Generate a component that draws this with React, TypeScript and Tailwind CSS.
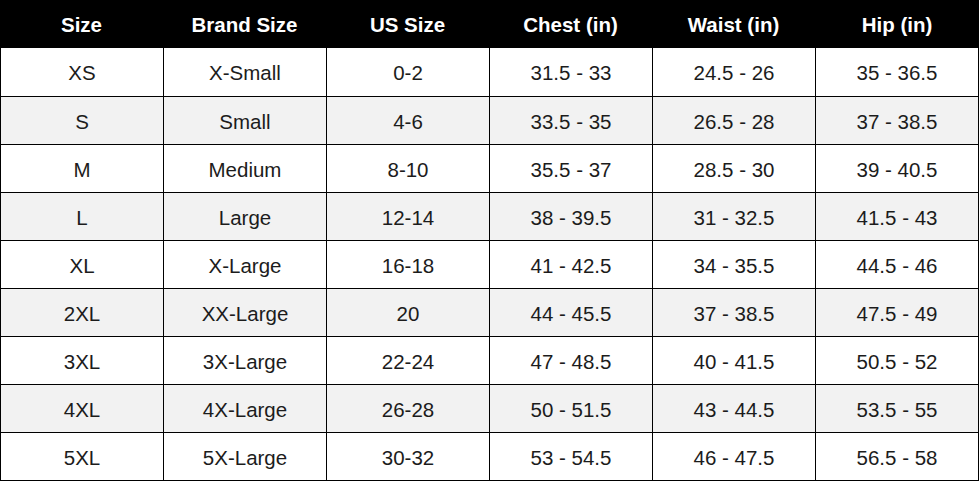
const headers = ["Size", "Brand Size", "US Size", "Chest (in)", "Waist (in)", "Hip (in)"];

const rows = [
  ["XS", "X-Small", "0-2", "31.5 - 33", "24.5 - 26", "35 - 36.5"],
  ["S", "Small", "4-6", "33.5 - 35", "26.5 - 28", "37 - 38.5"],
  ["M", "Medium", "8-10", "35.5 - 37", "28.5 - 30", "39 - 40.5"],
  ["L", "Large", "12-14", "38 - 39.5", "31 - 32.5", "41.5 - 43"],
  ["XL", "X-Large", "16-18", "41 - 42.5", "34 - 35.5", "44.5 - 46"],
  ["2XL", "XX-Large", "20", "44 - 45.5", "37 - 38.5", "47.5 - 49"],
  ["3XL", "3X-Large", "22-24", "47 - 48.5", "40 - 41.5", "50.5 - 52"],
  ["4XL", "4X-Large", "26-28", "50 - 51.5", "43 - 44.5", "53.5 - 55"],
  ["5XL", "5X-Large", "30-32", "53 - 54.5", "46 - 47.5", "56.5 - 58"],
];

const rowClass = (r: number) => {
  const bg = r % 2 === 1 ? "bg-[#f2f2f2]" : "bg-white";
  if (r === 0) return `flex h-[48px] ${bg}`;
  if (r === rows.length - 1) return `flex h-[49px] border-y border-black ${bg}`;
  return `flex h-[48px] border-t border-black ${bg}`;
};

const App = () => {
  return (
    <div className="w-[979px] bg-white font-['Liberation_Sans',Arial,sans-serif] text-[20.5px] leading-none">
      <div className="flex h-[48px] bg-black text-white font-bold">
        {headers.map((h, i) => (
          <div
            key={h}
            className={
              i === 5
                ? "flex flex-1 items-center justify-center pt-[2px]"
                : "flex w-[163px] items-center justify-center pt-[2px]"
            }
          >
            {h}
          </div>
        ))}
      </div>
      {rows.map((row, r) => (
        <div key={row[0]} className={`${rowClass(r)} text-[#1c1c1c]`}>
          {row.map((cell, i) => (
            <div
              key={i}
              className={
                i === 5
                  ? "flex flex-1 items-center justify-center border-x border-black pt-[3px]"
                  : "flex w-[163px] items-center justify-center border-l border-black pt-[3px]"
              }
            >
              {cell}
            </div>
          ))}
        </div>
      ))}
    </div>
  );
};

export default App;
